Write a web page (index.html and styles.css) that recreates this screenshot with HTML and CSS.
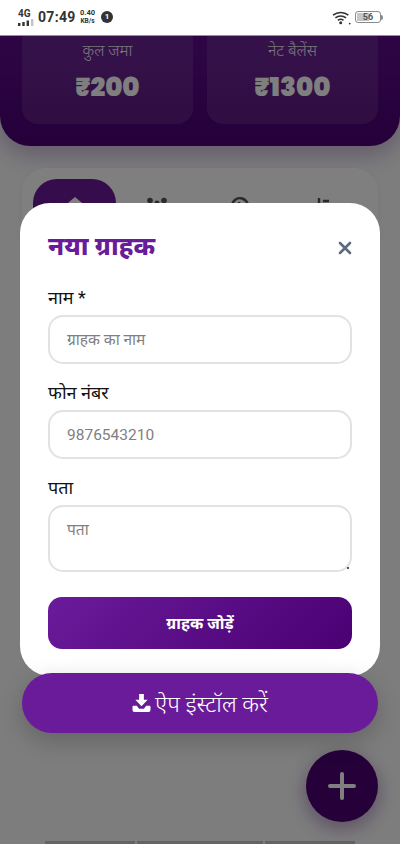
FILE: index.html
```html
<!DOCTYPE html>
<html lang="hi">
<head>
<meta charset="utf-8">
<title>नया ग्राहक</title>
<link rel="stylesheet" href="styles.css">
</head>
<body>
<div class="phone">
  <div class="statusbar">
    <div class="status-left">
      <div class="net">
        <span class="net-label">4G</span>
        <svg class="net-bars" width="16" height="7" viewBox="0 0 16 7"><rect x="0" y="4" width="2.400" height="3" fill="#333"/><rect x="4.300" y="3" width="2.400" height="4" fill="#333"/><rect x="8.600" y="1.500" width="2.400" height="5.500" fill="#333"/><rect x="13" y="0" width="2.400" height="7" fill="#c4c4c4"/></svg>
      </div>
      <span class="clock">07:49</span>
      <div class="speed"><span>0.40</span><span class="speed-unit">KB/s</span></div>
      <span class="notif">1</span>
    </div>
    <div class="status-right">
      <svg class="wifi" width="19" height="15" viewBox="0 0 19 15"><path d="M1 5.200a12 12 0 0 1 15.400 0M3.400 7.900a8.300 8.300 0 0 1 10.600 0M5.900 10.400a4.600 4.600 0 0 1 5.600 0" fill="none" stroke="#333" stroke-width="1.500"/><circle cx="8.700" cy="12.800" r="1.500" fill="#333"/><circle cx="17.700" cy="13.600" r=".9" fill="#333"/></svg>
      <div class="battery"><div class="battery-body"><span class="battery-fill"></span><span class="battery-num">56</span></div><span class="battery-tip"></span></div>
    </div>
  </div>

  <div class="app">
    <header class="hero">
      <div class="stat"><div class="stat-label">कुल जमा</div><div class="stat-value">₹200</div></div>
      <div class="stat"><div class="stat-label">नेट बैलेंस</div><div class="stat-value">₹1300</div></div>
    </header>
    <nav class="tabs">
      <div class="tab tab-active"><svg width="26" height="24" viewBox="0 0 26 24"><path d="M13 0L26 11V24H0V11z" fill="#fff"/></svg></div>
      <div class="tab"><svg width="24" height="24" viewBox="0 0 24 24"><circle cx="5" cy="3.500" r="2.800" fill="#555"/><circle cx="19" cy="3.500" r="2.800" fill="#555"/><circle cx="12" cy="6" r="2.500" fill="#555"/></svg></div>
      <div class="tab"><svg width="24" height="24" viewBox="0 0 24 24"><path d="M5 9a8 8 0 1 1 2.500 6M12 5v5" fill="none" stroke="#555" stroke-width="2.400"/></svg></div>
      <div class="tab"><svg width="24" height="24" viewBox="0 0 24 24"><path d="M10 1v18M14 4h6M14 9h4" fill="none" stroke="#555" stroke-width="2.400"/></svg></div>
    </nav>
  </div>

  <button class="fab" type="button" aria-label="जोड़ें"><svg width="30" height="30" viewBox="0 0 30 30"><path d="M15 3v24M3 15h24" stroke-width="4" stroke-linecap="round"/></svg></button>
  <div class="home-strip"><span class="strip-a"></span><span class="strip-b"></span><span class="strip-a"></span></div>

  <div class="scrim"></div>

  <section class="modal">
    <div class="modal-head">
      <h2 class="modal-title">नया ग्राहक</h2>
      <button class="close" type="button" aria-label="बंद करें"><svg width="14" height="14" viewBox="0 0 14 14"><path d="M2 2l10 10M12 2L2 12" stroke="#5f6b7a" stroke-width="2.600" stroke-linecap="round"/></svg></button>
    </div>
    <form class="form">
      <div class="field">
        <label class="label">नाम *</label>
        <input class="input" type="text" placeholder="ग्राहक का नाम">
      </div>
      <div class="field">
        <label class="label">फोन नंबर</label>
        <input class="input" type="text" placeholder="9876543210">
      </div>
      <div class="field field-area">
        <label class="label">पता</label>
        <textarea class="input textarea" placeholder="पता"></textarea>
        <span class="grip"></span>
      </div>
      <button class="submit" type="button">ग्राहक जोड़ें</button>
    </form>
  </section>

  <button class="install" type="button">
    <svg width="19" height="18" viewBox="0 0 19 19"><path d="M7 0h5v6h4l-6.500 7L3 6h4z" fill="#fff"/><path d="M1 12.500h3.500l2.500 3h5l2.500-3H18a1 1 0 0 1 1 1V17a2 2 0 0 1-2 2H2a2 2 0 0 1-2-2v-3.500a1 1 0 0 1 1-1z" fill="#fff"/></svg>
    <span>ऐप इंस्टॉल करें</span>
  </button>
</div>
</body>
</html>
```
FILE: styles.css
```css
* { box-sizing: border-box; }
html, body { margin: 0; padding: 0; }
body { font-family: Roboto, "Noto Sans", "Noto Sans Devanagari", sans-serif; background: #fff; }
.phone { position: relative; width: 400px; height: 844px; overflow: hidden; background: #fbfbfb; }

.statusbar { position: relative; z-index: 5; height: 36px; background: #fff; display: flex; justify-content: space-between; align-items: center; padding: 0 17px 1px 18px; color: #333; border-bottom: 1px solid #9c8aa6; }
.status-left { display: flex; align-items: center; }
.status-right { display: flex; align-items: center; gap: 4px; }
.net { display: flex; flex-direction: column; align-items: flex-start; width: 20px; }
.net-label { font-size: 10px; line-height: 9px; font-weight: 700; }
.net-bars { margin-top: 1px; }
.clock { font-size: 14px; font-weight: 700; letter-spacing: .3px; width: 42px; }
.speed { display: flex; flex-direction: column; width: 15px; font-size: 7.500px; font-weight: 700; line-height: 8px; text-align: center; white-space: nowrap; }
.speed-unit { font-size: 6.500px; }
.notif { width: 12px; height: 12px; border-radius: 50%; background: #333; color: #fff; font-size: 8px; font-weight: 700; line-height: 12px; text-align: center; margin-left: 6px; }
.battery { display: flex; align-items: center; }
.battery-body { position: relative; width: 26px; height: 12px; border: 1px solid #8b8b8b; border-radius: 3px; padding: 1px; }
.battery-fill { display: block; width: 56%; height: 100%; background: #c6c6c6; }
.battery-num { position: absolute; inset: 0; font-size: 9px; line-height: 10px; font-weight: 700; text-align: center; color: #555; }
.battery-tip { width: 2px; height: 5px; background: #8b8b8b; border-radius: 0 2px 2px 0; }

.hero { height: 110px; display: flex; gap: 14px; padding: 0 22px 22px; background: linear-gradient(180deg, #5c0c8a, #4a0072); border-radius: 0 0 30px 30px; box-shadow: 0 8px 24px rgba(74, 0, 114, .3); margin-bottom: 22px; }
.stat { flex: 1; margin-top: -12px; border-radius: 16px; background: rgba(255, 255, 255, .1); text-align: center; padding-top: 17px; }
.stat-label { font-size: 16px; line-height: 20px; font-weight: 300; color: #fff; opacity: .9; }
.stat-value { font-family: "Poppins", "Lato", Roboto, sans-serif; font-size: 26px; font-weight: 900; line-height: 36px; margin-top: 8px; color: #fff; }

.tabs { margin: 0 22px; height: 90px; padding: 11px; border-radius: 24px; background: #fff; box-shadow: 0 2px 8px rgba(0, 0, 0, .06); display: flex; }
.tab { flex: 0 0 82px; display: flex; justify-content: center; padding-top: 18px; }
.tab-active { flex: 0 0 83px; background: #6a1b9a; border-radius: 24px; }

.fab { position: absolute; z-index: 1; left: 306px; top: 750px; width: 72px; height: 72px; border: 0; border-radius: 50%; padding: 0; background: #4a0072; display: flex; align-items: center; justify-content: center; box-shadow: 0 6px 20px rgba(74, 0, 114, .4); }
.fab path { stroke: #fff; }
.home-strip { position: absolute; left: 45px; bottom: 0; display: flex; gap: 2px; height: 3px; }
.strip-a { width: 90px; background: #c8c8c8; }
.strip-b { width: 126px; background: #c8c8c8; }

.scrim { position: absolute; inset: 36px 0 0; z-index: 2; background: rgba(0, 0, 0, .5); }

.modal { position: absolute; z-index: 3; left: 20px; top: 203px; width: 360px; height: 473px; background: #fff; border-radius: 30px; padding: 27px 28px 28px; }
.modal-head { display: flex; justify-content: space-between; align-items: center; height: 32px; margin-bottom: 23px; }
.modal-title { margin: 0; font-size: 25.500px; line-height: 32px; font-weight: 800; color: #6a1b9a; }
.close { border: 0; background: none; padding: 0; display: flex; margin-top: 3px; }
.form { display: flex; flex-direction: column; }
.field { display: flex; flex-direction: column; margin-bottom: 16px; }
.field-area { position: relative; }
.label { font-size: 18px; line-height: 25px; color: #111; margin-bottom: 5px; font-weight: 400; }
.input { width: 304px; height: 49px; border: 2px solid #e2e2e2; border-radius: 15px; padding: 0 17px; font-family: inherit; font-size: 15.500px; background: #fff; outline: none; color: #333; }
.input::placeholder { color: #808080; opacity: 1; }
.textarea { height: 67px; padding-top: 13px; resize: none; display: block; line-height: 20px; }
.grip { position: absolute; right: 3px; bottom: 3px; width: 2px; height: 2px; background: #555; }
.submit { margin-top: 9px; width: 304px; height: 52px; border: 0; border-radius: 14px; background: linear-gradient(135deg, #6a1b9a, #4a0072); color: #fff; font-family: inherit; font-size: 16px; font-weight: 700; }

.install { position: absolute; z-index: 4; left: 22px; top: 673px; width: 356px; height: 60px; border: 0; border-radius: 30px; background: #6a1b9a; color: #fff; font-family: inherit; font-size: 23px; font-weight: 300; display: flex; align-items: center; justify-content: center; gap: 4px; box-shadow: 0 8px 24px rgba(0, 0, 0, .2); }
```
